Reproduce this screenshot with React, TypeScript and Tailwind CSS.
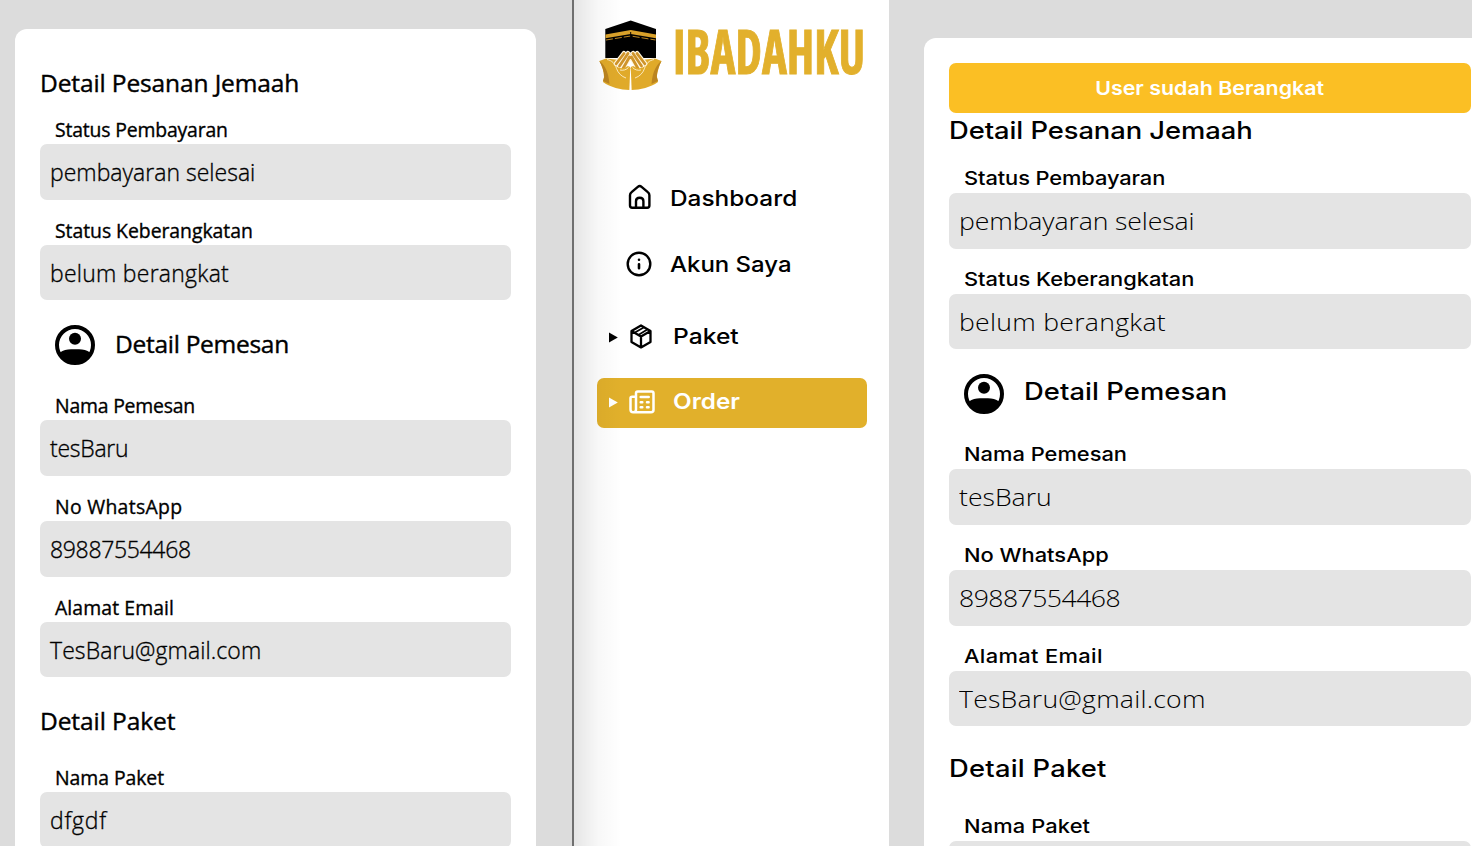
import React, { ReactNode } from "react";

type FieldData = { label: string; value?: string; labelClass?: string; valueClass?: string };
type Theme = "compact" | "wide";

const styles = {
  compact: {
    heading: "font-['Open_Sans',sans-serif] text-[24.5px] font-medium [-webkit-text-stroke:0.4px]",
    label: "font-['Open_Sans',sans-serif] text-[19.4px] font-medium [-webkit-text-stroke:0.35px]",
    value: "font-['Open_Sans',sans-serif] text-[24px] font-light scale-x-[0.957] [-webkit-text-stroke:0.35px]",
  },
  wide: {
    heading: "font-['Inter',sans-serif] text-[24px] font-medium scale-x-[1.14]",
    label: "font-['Inter',sans-serif] text-[19.2px] font-medium scale-x-[1.14] -translate-y-px",
    value: "font-['Open_Sans',sans-serif] text-[24.5px] font-light scale-x-[1.086]",
  },
};

function Text({ className, children }: { className: string; children: ReactNode }) {
  return <span className={`inline-block origin-left whitespace-nowrap ${className}`}>{children}</span>;
}

function Field({ theme, field }: { theme: Theme; field: FieldData }) {
  const s = styles[theme];
  return (
    <div className="h-[100.8px] shrink-0">
      <div className="flex h-[45px] items-end pl-[15px]">
        <Text className={`leading-[28px] ${s.label} ${field.labelClass ?? ""}`}>{field.label}</Text>
      </div>
      <div className="flex h-[55.4px] items-center rounded-[7px] bg-[#e4e4e4] pl-2.5">
        {field.value && <Text className={`leading-[30px] ${s.value} ${field.valueClass ?? ""}`}>{field.value}</Text>}
      </div>
    </div>
  );
}

function AccountIcon() {
  return (
    <svg className="size-10 shrink-0" viewBox="0 0 40 40">
      <circle cx="20" cy="20" r="18" fill="none" stroke="#000" strokeWidth="4" />
      <circle cx="20" cy="13.8" r="6" />
      <path d="M5 27.6C8 25.2 12 24.2 16 24.2h8c4 0 8 1 11 3.4C32 34.5 27 38 20 38S8 34.5 5 27.6z" />
    </svg>
  );
}

function Logo() {
  return (
    <div className="flex h-[72px] items-start pl-6">
      <svg className="h-[72px] w-16 shrink-0" viewBox="0 0 64 72">
        <path d="M32.700 1.500 58 10v29H7.300V10z" fill="#000" />
        <path d="M7.500 15.500 32.700 11 58 15.500v3.700L32.700 15 7.500 19.200z" fill="#d9a12a" />
        <path d="M8 21 32.700 17 57.500 21" fill="none" stroke="#b98522" strokeWidth="1" strokeDasharray="7 2" />
        <path d="M32.700 13v5" stroke="#000" strokeWidth="1" />
        <path d="M1.300 42 8 39.500l14 1.500 10.500 9L43 41l14-1.500 6.500 2.500C61 47 59 54 59 58l1 5c-7.500 5.500-17.500 7.700-26.500 8h-2C22.500 70.700 12.500 68.500 5 63l1-5c0-6-2-11-4.700-16z" fill="#e0aa2a" />
        <path d="M1.300 42C6 45 10.500 52 11.500 65L5 62l1.200-4c0-6-2.200-11-4.900-16zM63.500 42C59 45 54.500 52 53.500 65l6.500-3-1.200-4c0-6 2.200-11 4.700-16z" fill="#bb8420" />
        <g fill="none" strokeLinecap="round">
          <path d="m18 45 8-10.500M21.500 47l8.500-12.500M25 49.500 31.500 38M47 45l-8-10.500M43.500 47 35 34.500M40 49.500 33.500 38" stroke="#fff6df" strokeWidth="5" />
          <path d="m18 45 8-10.500M21.500 47l8.500-12.500M25 49.500 31.500 38M47 45l-8-10.500M43.500 47 35 34.500M40 49.500 33.500 38" stroke="#cf942a" strokeWidth="2.800" />
        </g>
        <path d="M14 44c4 5 9 6.500 14 4 3-1.500 4.500-.5 4.300 2l-.8 11C22 60 15 53 14 44zM51 44c-4 5-9 6.500-14 4-3-1.500-4.500-.5-4.300 2l.8 11C43 60 50 53 51 44z" fill="#e0aa2a" />
        <path d="M9 40.500c5 1 8 4 9.500 9 1.500 4.500 5 8 9.500 9.500M56 40.500c-5 1-8 4-9.500 9-1.500 4.500-5 8-9.500 9.500M22 51c3 .8 6.500-.2 8.500-2.500M43 51c-3 .8-6.500-.2-8.500-2.500" fill="none" stroke="#fff6df" strokeWidth=".8" />
        <path d="M32.200 50h.6l.9 22h-2.400z" fill="#fff" />
      </svg>
      <span className="ml-[11px] mt-px inline-block origin-left scale-x-[0.783] font-['Open_Sans',sans-serif] text-[60.5px] font-bold leading-[61px] text-[#e2b02c] [font-stretch:75%] [-webkit-text-stroke:1px]">
        IBADAHKU
      </span>
    </div>
  );
}

function HomeIcon() {
  return (
    <svg className="h-[26px] w-6 -translate-y-px" viewBox="0 0 24 26" fill="none" stroke="currentColor" strokeWidth="2.400">
      <path d="M2 11.200c0-1.400.6-2.300 1.600-3.100l6.200-5.200c1.200-1 2.600-1 3.800 0l6.200 5.200c1 .8 1.600 1.700 1.600 3.100v10.300c0 1.300-.9 2.200-2.200 2.200h-15c-1.300 0-2.200-.9-2.200-2.200z" />
      <path d="M8 23.500v-6.300c0-2 1.400-3.400 3.700-3.400s3.700 1.400 3.700 3.400v6.300" />
    </svg>
  );
}

function InfoIcon() {
  return (
    <svg className="size-[26px]" viewBox="0 0 26 26" fill="none" stroke="currentColor" strokeWidth="2.400" strokeLinecap="round">
      <circle cx="13" cy="13" r="11.300" />
      <path d="M13 13.300v4M13 8.700v.1" strokeWidth="2.600" />
    </svg>
  );
}

function PackageIcon() {
  return (
    <svg className="h-[25px] w-[22px]" viewBox="0 0 22 25" fill="none" stroke="currentColor" strokeWidth="2.300" strokeLinejoin="round">
      <path d="m11 1.400 9.500 5.500v11L11 23.400l-9.500-5.500v-11zM1.500 6.900l9.500 5.700 9.500-5.700M11 12.600v10.700" />
      <path d="m4.500 8.700 9.600-5.500M8.300 10.900l9.400-5.700" strokeWidth="1.700" />
    </svg>
  );
}

function NewsIcon() {
  return (
    <svg className="h-6 w-[26px]" viewBox="0 0 26 24" fill="none" stroke="currentColor" strokeWidth="2.500" strokeLinecap="round" strokeLinejoin="round">
      <path d="M4.200 22.300H22a2.500 2.500 0 0 0 2.500-2.500V3.200c0-1-.7-1.700-1.700-1.700H8.700C7.700 1.500 7 2.200 7 3.200v16.300a2.750 2.750 0 0 1-5.500 0V8.300c0-1 .6-1.600 1.600-1.600h3.900" />
      <path d="M11.700 7h8M11.700 12.200h1.600M18 12.200h1.600M11.700 17.200h1.600M18 17.200h1.600" />
    </svg>
  );
}

function Arrow() {
  return (
    <svg className="h-[11px] w-[9px] translate-y-px" viewBox="0 0 9 11" fill="currentColor">
      <path d="M0 .5 8.800 5.500 0 10.500z" />
    </svg>
  );
}

const menuText = "font-['Inter',sans-serif] text-[21.6px] leading-[28px]";

function Sidebar() {
  return (
    <aside className="relative w-[315px] shrink-0 bg-white pt-[19px]">
      <Logo />
      <nav className="flex flex-col pl-[23px] pr-[22px] pt-[82px]">
        <div className="flex h-[50px] items-center pl-[31px]">
          <HomeIcon />
          <Text className={`ml-[18px] font-medium scale-x-[1.13] ${menuText}`}>Dashboard</Text>
        </div>
        <div className="mt-4 flex h-[50px] items-center pl-[29px]">
          <InfoIcon />
          <Text className={`ml-[18px] font-medium scale-x-[1.11] ${menuText}`}>Akun Saya</Text>
        </div>
        <div className="mt-[22px] flex h-[50px] items-center pl-3">
          <Arrow />
          <div className="ml-3"><PackageIcon /></div>
          <Text className={`ml-[21px] font-medium scale-x-[1.14] ${menuText}`}>Paket</Text>
        </div>
        <div className="mt-[17px] flex h-[50px] items-center rounded-[7px] bg-[#e1b02b] pl-3 text-white">
          <div className="pb-[3px]"><Arrow /></div>
          <div className="ml-[11px] pb-[3px]"><NewsIcon /></div>
          <Text className={`ml-[18px] pb-[4px] font-semibold scale-x-[1.125] ${menuText}`}>Order</Text>
        </div>
      </nav>
      <div className="pointer-events-none absolute inset-y-0 left-0 w-12 bg-linear-to-r from-black/10 via-black/3 to-transparent" />
    </aside>
  );
}

const order: FieldData[] = [
  { label: "Status Pembayaran", value: "pembayaran selesai", labelClass: "tracking-[-0.17px]", valueClass: "tracking-[0.02px]" },
  { label: "Status Keberangkatan", value: "belum berangkat", labelClass: "tracking-[-0.04px]", valueClass: "tracking-[0.27px]" },
];
const customer: FieldData[] = [
  { label: "Nama Pemesan", value: "tesBaru", labelClass: "tracking-[-0.2px]", valueClass: "tracking-[-0.25px]" },
  { label: "No WhatsApp", value: "89887554468", labelClass: "tracking-[0.3px]", valueClass: "tracking-[-0.33px]" },
  { label: "Alamat Email", value: "TesBaru@gmail.com", labelClass: "tracking-[0.1px]", valueClass: "tracking-[0.1px]" },
];
const pack: FieldData[] = [{ label: "Nama Paket", value: "dfgdf", labelClass: "tracking-[-0.05px]", valueClass: "tracking-[0.8px]" }];

const orderWide: FieldData[] = [
  { label: "Status Pembayaran", value: "pembayaran selesai", labelClass: "tracking-[-0.1px]", valueClass: "tracking-[-0.1px]" },
  { label: "Status Keberangkatan", value: "belum berangkat", labelClass: "tracking-[-0.03px]", valueClass: "tracking-[0.25px]" },
];
const customerWide: FieldData[] = [
  { label: "Nama Pemesan", value: "tesBaru" },
  { label: "No WhatsApp", value: "89887554468", valueClass: "tracking-[-0.5px]" },
  { label: "Alamat Email", value: "TesBaru@gmail.com", labelClass: "tracking-[0.3px]", valueClass: "tracking-[0.2px]" },
];
const packWide: FieldData[] = [{ label: "Nama Paket", labelClass: "tracking-[0.1px]" }];

function Fields({ theme, items }: { theme: Theme; items: FieldData[] }) {
  return <>{items.map((f) => <Field key={f.label} theme={theme} field={f} />)}</>;
}

export default function App() {
  return (
    <div className="flex h-[846px] w-[1472px] overflow-hidden bg-[#dcdcdc] text-black">
      <section className="h-full w-[572px] shrink-0 overflow-hidden pl-[15px] pt-[29px]">
        <div className="flex h-[900px] w-[521px] flex-col rounded-xl bg-white px-[25px]">
          <div className="flex h-[70.3px] shrink-0 items-end pb-px">
            <Text className={`leading-[30px] tracking-[-0.12px] ${styles.compact.heading}`}>Detail Pesanan Jemaah</Text>
          </div>
          <Fields theme="compact" items={order} />
          <div className="flex h-[74.5px] shrink-0 items-start gap-5 pl-[15px] pt-[24px]">
            <AccountIcon />
            <Text className={`mt-[4px] leading-[30px] tracking-[-0.28px] ${styles.compact.heading}`}>Detail Pemesan</Text>
          </div>
          <Fields theme="compact" items={customer} />
          <div className="flex h-[69.5px] shrink-0 items-start pt-[28px]">
            <Text className={`leading-[30px] tracking-[-0.08px] ${styles.compact.heading}`}>Detail Paket</Text>
          </div>
          <Fields theme="compact" items={pack} />
        </div>
      </section>

      <div className="w-0.5 shrink-0 bg-[#707070]" />
      <Sidebar />

      <section className="h-full min-w-0 flex-1 overflow-hidden pl-[35px] pt-[38px]">
        <div className="flex h-[900px] w-[572px] flex-col rounded-xl bg-white px-[25px] pt-[25px]">
          <div className="flex h-[50px] shrink-0 items-center justify-center rounded-[7px] bg-[#fbbf24]">
            <span className="scale-x-[1.115] whitespace-nowrap font-['Inter',sans-serif] text-[19.2px] font-semibold text-white">
              User sudah Berangkat
            </span>
          </div>
          <div className="flex h-[35.3px] shrink-0 items-center">
            <Text className={`leading-[30px] tracking-[-0.06px] ${styles.wide.heading}`}>Detail Pesanan Jemaah</Text>
          </div>
          <Fields theme="wide" items={orderWide} />
          <div className="flex h-[74.5px] shrink-0 items-start gap-5 pl-[15px] pt-[24px]">
            <AccountIcon />
            <Text className={`mt-[3px] leading-[30px] tracking-[0.06px] ${styles.wide.heading}`}>Detail Pemesan</Text>
          </div>
          <Fields theme="wide" items={customerWide} />
          <div className="flex h-[69.5px] shrink-0 items-start pt-[27px]">
            <Text className={`leading-[30px] tracking-[0.2px] ${styles.wide.heading}`}>Detail Paket</Text>
          </div>
          <Fields theme="wide" items={packWide} />
        </div>
      </section>
    </div>
  );
}
